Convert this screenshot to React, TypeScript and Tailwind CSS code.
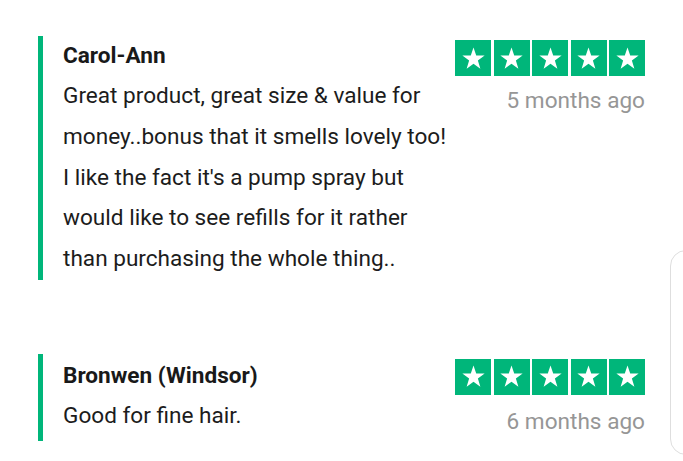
import React from "react";

function Star() {
  return (
    <div className="w-[36px] h-[36px] bg-[#00b67a] flex items-center justify-center">
      <svg width="25" height="25" viewBox="0 0 24 24">
        <polygon
          fill="#ffffff"
          points="12,1.5 14.6,9.2 22.7,9.2 16.2,14 18.6,21.8 12,17 5.4,21.8 7.8,14 1.3,9.2 9.4,9.2"
        />
      </svg>
    </div>
  );
}

function Stars() {
  return (
    <div className="flex gap-[2.5px]">
      <Star />
      <Star />
      <Star />
      <Star />
      <Star />
    </div>
  );
}

function Review({
  name,
  lines,
  time,
  leftPad,
  rightPad,
  timeGap,
}: {
  name: string;
  lines: string[];
  time: string;
  leftPad: string;
  rightPad: string;
  timeGap: string;
}) {
  return (
    <div className="flex justify-between items-start">
      <div className={`border-l-[5px] border-[#00b67a] pl-[20px] ${leftPad}`}>
        <div className="text-[22.6px] leading-[40px] font-bold text-[#191919]">{name}</div>
        {lines.map((l, i) => (
          <div key={i} className="text-[22.6px] leading-[40.8px] text-[#1c1c1c]">
            {l}
          </div>
        ))}
      </div>
      <div className={`flex flex-col items-end ${rightPad}`}>
        <Stars />
        <div className={`text-[22.6px] leading-[28px] text-[#969696] ${timeGap}`}>{time}</div>
      </div>
    </div>
  );
}

export default function App() {
  return (
    <div
      className="relative w-[683px] h-[461px] bg-white overflow-hidden"
      style={{ fontFamily: "Roboto, 'Noto Sans', sans-serif" }}
    >
      <div className="flex flex-col pl-[38px] pr-[38px] pt-[36px] gap-[74px]">
        <Review
          name="Carol-Ann"
          lines={[
            "Great product, great size & value for",
            "money..bonus that it smells lovely too!",
            "I like the fact it's a pump spray but",
            "would like to see refills for it rather",
            "than purchasing the whole thing..",
          ]}
          time="5 months ago"
          leftPad="pb-0"
          rightPad="pt-[4px]"
          timeGap="mt-[11px]"
        />
        <Review
          name="Bronwen (Windsor)"
          lines={["Good for fine hair."]}
          time="6 months ago"
          leftPad="pt-[2px] pb-[4px]"
          rightPad="pt-[5px]"
          timeGap="mt-[13px]"
        />
      </div>
      <div className="absolute left-[670px] top-[250px] w-[60px] h-[205px] rounded-[16px] border border-[#dedede] bg-white" />
    </div>
  );
}
